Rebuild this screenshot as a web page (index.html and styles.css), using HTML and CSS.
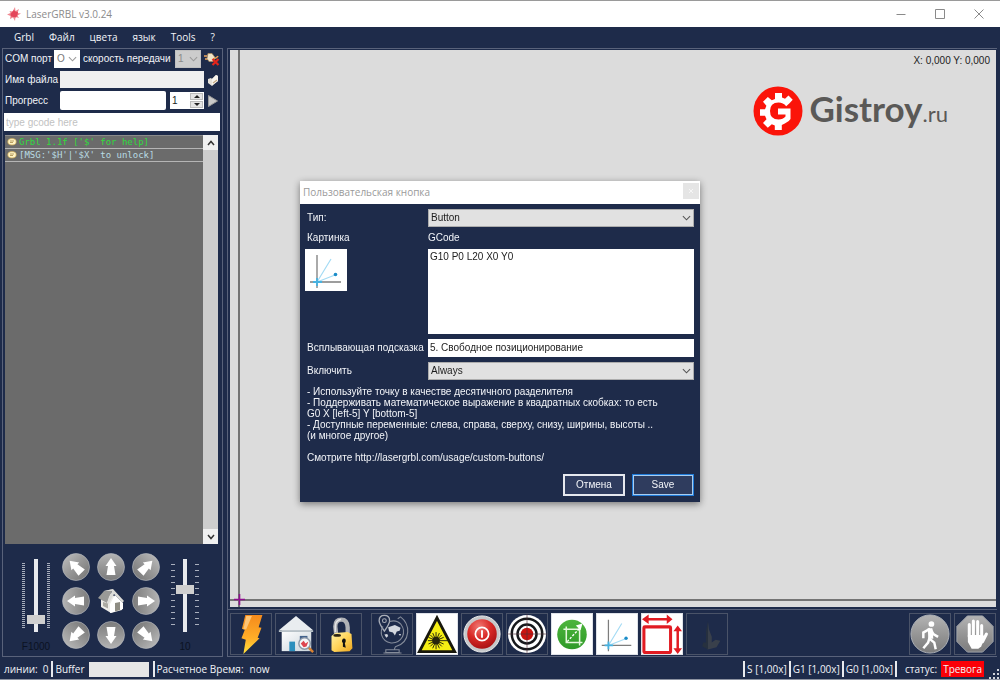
FILE: index.html
```html
<!DOCTYPE html>
<html lang="ru">
<head>
<meta charset="utf-8">
<title>LaserGRBL v3.0.24</title>
<link rel="stylesheet" href="styles.css">
</head>
<body>
<svg class="defs" aria-hidden="true">
  <defs>
    <linearGradient id="metal" x1="0" y1="0" x2="0" y2="1"><stop offset="0" stop-color="#b4b4b4"/><stop offset=".5" stop-color="#969696"/><stop offset="1" stop-color="#7c7c7c"/></linearGradient>
    <linearGradient id="bolt" x1="0" y1="0" x2="0" y2="1"><stop offset="0" stop-color="#f58a1c"/><stop offset=".6" stop-color="#ffae28"/><stop offset="1" stop-color="#ffe23c"/></linearGradient>
    <linearGradient id="gold" x1="0" y1="0" x2="1" y2="1"><stop offset="0" stop-color="#fff3a8"/><stop offset=".5" stop-color="#ffd45a"/><stop offset="1" stop-color="#eca41c"/></linearGradient>
    <linearGradient id="wall" x1="0" y1="0" x2="1" y2="1"><stop offset="0" stop-color="#ffffff"/><stop offset="1" stop-color="#c9d3da"/></linearGradient>
    <radialGradient id="redball" cx=".4" cy=".25" r=".8"><stop offset="0" stop-color="#f07872"/><stop offset=".5" stop-color="#d92a27"/><stop offset="1" stop-color="#a51012"/></radialGradient>
    <linearGradient id="green" x1="0" y1="0" x2="0" y2="1"><stop offset="0" stop-color="#4db53c"/><stop offset="1" stop-color="#2f9a28"/></linearGradient>
    <symbol id="chevron" viewBox="0 0 10 6"><path d="M1 1l4 4 4-4" fill="none" stroke="currentColor" stroke-width="1.2"/></symbol>
    <symbol id="jog" viewBox="0 0 28 28">
      <circle cx="14" cy="14" r="13.5" fill="url(#metal)" stroke="#b9bcc2" stroke-width=".6"/>
      <path d="M14 5l5.500 8h-2.500l1.500 9h-9l1.500-9h-2.500z" fill="#fff"/>
    </symbol>
    <symbol id="axes" viewBox="0 0 42 42">
      <path d="M12 6v33M5 33h31" stroke="#7d7d7d" stroke-width="1.300" fill="none"/>
      <path d="M12 33L26 10M12 33l18-7" stroke="#a4dbf4" stroke-width="1.200" fill="none"/>
      <path d="M12 29v8M8 33h9" stroke="#48b2e0" stroke-width="1.800"/>
      <circle cx="30.500" cy="25.500" r="1.800" fill="#1b8cc8"/>
    </symbol>
    <symbol id="bubble" viewBox="0 0 10 8"><ellipse cx="5" cy="3.800" rx="4.200" ry="3.200" fill="#fff3c4" stroke="#cfa952" stroke-width=".7"/><path d="M3 3h4M3 4.500h3" stroke="#9b7a38" stroke-width=".7"/></symbol>
  </defs>
</svg>

<header class="titlebar">
  <svg class="app-icon" viewBox="0 0 14 14"><path d="M8 0l.5 4L12 2l-1.500 4 3.500 .5-3.500 2L12 11l-3.500-1L8 14l-2-3.500L3 12l.5-3L0 7.500 3.500 6 2.500 4l3 .5z" fill="#f08a92"/><path d="M7 3l1.500 1.500L11 5l-.5 3L9 10.500 6.500 10 4 9.500 3.500 7 5 5z" fill="#e4455a"/></svg>
  <h1 class="app-title">LaserGRBL v3.0.24</h1>
  <div class="window-buttons">
    <button type="button" aria-label="Свернуть"><svg viewBox="0 0 10 10"><path d="M0.500 5.500h9"/></svg></button>
    <button type="button" aria-label="Развернуть"><svg viewBox="0 0 10 10"><path d="M.5 .5h9v9h-9z"/></svg></button>
    <button type="button" aria-label="Закрыть"><svg viewBox="0 0 10 10"><path d="M.5 .5l9 9M9.500 .5l-9 9"/></svg></button>
  </div>
</header>

<nav class="menu">
  <button type="button">Grbl</button><button type="button">Файл</button><button type="button">цвета</button><button type="button">язык</button><button type="button">Tools</button><button type="button">?</button>
</nav>

<main class="workspace">
  <section class="side">
    <div class="connect">
      <div class="row">
        <label for="port">COM порт</label>
        <span class="combo port"><select id="port"><option>O</option></select><svg><use href="#chevron"/></svg></span>
        <label for="baud">скорость передачи</label>
        <span class="combo baud"><select id="baud" disabled><option>1</option></select><svg><use href="#chevron"/></svg></span>
        <button type="button" class="mini" aria-label="Подключить"><svg viewBox="0 0 16 14"><path d="M0 4h3M1 7h3" stroke="#f0a860" stroke-width="1.500"/><path d="M4 1.500l4 0 3 4-2 4-4 0-2-3z" fill="#efe3c8" stroke="#a98a60" stroke-width=".8"/><path d="M9 7q4-1 5-3" stroke="#e8a052" stroke-width="1.500" fill="none"/><path d="M8.500 7l6 6M14.500 7l-6 6" stroke="#e2251b" stroke-width="2.200"/></svg></button>
      </div>
      <div class="row">
        <label for="file" class="lead">Имя файла</label>
        <input id="file" class="file" type="text" readonly>
        <button type="button" class="mini" aria-label="Открыть файл"><svg viewBox="0 0 16 14"><path d="M4 6l3-1 1 1 4-4 2 1v5l-6 5-4-3z" fill="#e6e1d8"/><path d="M8 6l4-4 2 1v5l-6 4z" fill="#f8f5ee"/><path d="M9 10l4-3" stroke="#c4a880" stroke-width="1.200"/></svg></button>
      </div>
      <div class="row">
        <label for="progress" class="lead">Прогресс</label>
        <progress id="progress" class="bar" value="0" max="100"></progress>
        <span class="spin"><input type="text" inputmode="numeric" value="1" aria-label="Повторы"><span class="spin-buttons"><button type="button" aria-label="Больше"><svg viewBox="0 0 6 3"><path d="M3 0l3 3H0z"/></svg></button><button type="button" aria-label="Меньше"><svg viewBox="0 0 6 3"><path d="M0 0h6L3 3z"/></svg></button></span></span>
        <button type="button" class="mini" aria-label="Пуск"><svg viewBox="0 0 16 14"><path d="M4.500 1.500l9 5.500-9 5.500z" fill="#c9c9c9" stroke="#999"/></svg></button>
      </div>
      <input class="gcode-line" type="text" placeholder="type gcode here" aria-label="GCode">
    </div>
    <div class="log">
      <ul class="log-lines">
        <li class="ok"><svg><use href="#bubble"/></svg>Grbl 1.1f ['$' for help]</li>
        <li><svg><use href="#bubble"/></svg>[MSG:'$H'|'$X' to unlock]</li>
      </ul>
      <div class="scrollbar">
        <button type="button" aria-label="Вверх"><svg viewBox="0 0 8 6"><path d="M1 5l3-3.500L7 5"/></svg></button>
        <button type="button" aria-label="Вниз"><svg viewBox="0 0 8 6"><path d="M1 1l3 3.500L7 1"/></svg></button>
      </div>
    </div>
    <div class="jog">
      <div class="slider fine">
        <div class="rail"><input id="speed" type="range" min="0" max="100" value="13"></div>
        <label for="speed">F1000</label>
      </div>
      <div class="pad">
        <button type="button" aria-label="Влево вверх"><svg><use href="#jog" transform="rotate(-45 14 14)"/></svg></button>
        <button type="button" aria-label="Вверх"><svg><use href="#jog"/></svg></button>
        <button type="button" aria-label="Вправо вверх"><svg><use href="#jog" transform="rotate(45 14 14)"/></svg></button>
        <button type="button" aria-label="Влево"><svg><use href="#jog" transform="rotate(-90 14 14)"/></svg></button>
        <button type="button" aria-label="Домой"><svg viewBox="0 0 28 28"><path d="M4 11l9-5 12 9v8L14 26 4 20z" fill="#ecebe7"/><path d="M13 17l5-9 8 8v6l-13 4z" fill="#fff"/><path d="M1 11L7 4l9-2-4 8-2 6z" fill="#9a9a97"/><path d="M7 4l9-2 11 12-1.500 1.500L17 7l-5.500 10L10 16l5-12z" fill="#dcdcd8"/><path d="M18 16l5-1v8l-5 1.500z" fill="#8e8c83"/><path d="M6 15l5 1.500v5L6 19z" fill="#aaa9a2"/></svg></button>
        <button type="button" aria-label="Вправо"><svg><use href="#jog" transform="rotate(90 14 14)"/></svg></button>
        <button type="button" aria-label="Влево вниз"><svg><use href="#jog" transform="rotate(-135 14 14)"/></svg></button>
        <button type="button" aria-label="Вниз"><svg><use href="#jog" transform="rotate(180 14 14)"/></svg></button>
        <button type="button" aria-label="Вправо вниз"><svg><use href="#jog" transform="rotate(135 14 14)"/></svg></button>
      </div>
      <div class="slider coarse">
        <div class="rail"><input id="step" type="range" min="0" max="100" value="60"></div>
        <label for="step">10</label>
      </div>
    </div>
  </section>

  <section class="stage">
    <div class="preview">
      <output class="coords">X: 0,000 Y: 0,000</output>
      <div class="brand">
        <svg class="brand-mark" viewBox="0 0 50 50">
          <circle cx="25" cy="25" r="24.500" fill="#fb1409"/>
          <path d="M22 7h7v4.500l3 1.300 3.500-3.300 4.200 4.300-3.200 3.400-3.300 3q-3-3.700-7.700-3.700-8.500 0-8.500 8.500t8.500 8.500q4.500 0 7-3v-2H25v-6h12.500v10.500l-1.700 2-4 2.500-3 1.500V44h-7v-4.500l-3-1.300-4 3.600-4.800-4.800 3.500-3.700-1.500-3.600H7v-6.500h5l1.400-3.500-3.400-4 4.800-4.700 4 3.300 3.200-1.300z" fill="#fff"/>
        </svg>
        <span class="brand-name">Gistroy<small>.ru</small></span>
      </div>
      <svg class="origin" viewBox="0 0 11 11"><path d="M5.500 0v11M0 5.500h11" stroke="#8d0f8d" stroke-width="1.600"/></svg>
    </div>
    <div class="toolbar">
      <button type="button" aria-label="Подключение"><svg viewBox="0 0 42 42"><path d="M15 1h18l-4 13 3 .5-4 10.500 2 .5L13 42l2.500-15-4.500-1.500 3.500-9-3-1z" fill="url(#bolt)"/><path d="M16 2h6L16 16h-3z" fill="#ffc574"/></svg></button>
      <button type="button" aria-label="Поиск дома"><svg viewBox="0 0 42 42"><path d="M6 17h31v22H6z" fill="url(#wall)"/><path d="M21 2L3 17h36z" fill="#e9edf0"/><path d="M3 17h36v2H3z" fill="#b8c2c8"/><path d="M14 29h6v10h-6z" fill="#2c8fbd"/><path d="M25 23h8v4h-8z" fill="#42628c"/><path d="M34 35l5 5" stroke="#d98232" stroke-width="2.500"/><circle cx="30" cy="31" r="6" fill="#f4f6f8" stroke="#8b98a8" stroke-width="1.500"/><path d="M26 31l3-3 2 3 3-2-2 5-3 1z" fill="#de4550"/></svg></button>
      <button type="button" aria-label="Разблокировать"><svg viewBox="0 0 42 42"><path d="M16 22l-1-9q0-7 6.500-7 6 0 6.500 8v6" fill="none" stroke="#b0b2b6" stroke-width="4.500"/><path d="M15 19v-6q0-6 6-7.500" fill="none" stroke="#e4e5e7" stroke-width="1.500"/><path d="M11 23l4-3 13-1 4 2 1 15-3 3-16 1-3-2z" fill="url(#gold)"/><ellipse cx="17" cy="22.500" rx="4" ry="1.500" fill="#2c2414"/><path d="M23 26q3-1 3 2 0 2-1 2.500l1 5-3-1 0-4q-2-2 0-4.500z" fill="#111"/></svg></button>
      <span class="gap"></span>
      <button type="button" aria-label="Глобус"><svg viewBox="0 0 42 42" fill="none" stroke="#858c9a" stroke-width="1.100"><path d="M13 1.500q5.500 0 5.500 5.500 0 3-5.500 11Q7.500 10 7.500 7q0-5.500 5.500-5.500z" stroke="#a9aeb8" stroke-width="1.400"/><circle cx="13" cy="7" r="2" stroke="#a9aeb8"/><path d="M18.500 8q7-2.500 12 3 4.500 6 1.500 13-4 7-12 6.500-8-1.500-10-8.500-1-5 1.500-9"/><path d="M27 5l3-2q8 6 7.500 16-1 12-13 15.500l-1 2.500M14.500 37.500h14v3h-14zM12 41h19"/><path d="M17 14l7-2.500 6 3-1 3-3 1-2 4-2-3-4-1zM13 21.500l3-.5 1 2-2 2zM28 21l2.500 0-1 2z" fill="#d3d7de" stroke="none"/></svg></button>
      <button type="button" class="lit" aria-label="Лазер"><svg viewBox="0 0 42 42"><path d="M21 4L39.500 39.500h-37z" fill="#f6ee14" stroke="#18170c" stroke-width="3"/><path d="M20 19v18M11.500 28h22M14 22l12 12M26 22L14 34M16.500 20l7 16M23.500 20l-7 16M12 24.500l16 7M12 31.500l16-7" stroke="#26240c" stroke-width="1"/><circle cx="20" cy="28" r="4" fill="#26240c"/></svg></button>
      <button type="button" aria-label="Сброс"><svg viewBox="0 0 42 42"><circle cx="21" cy="21" r="19" fill="#c6c8ca" stroke="#eceded"/><circle cx="21" cy="21" r="15.500" fill="url(#redball)"/><circle cx="21" cy="21" r="7" fill="none" stroke="#fff" stroke-width="1.800"/><path d="M21 17v8" stroke="#fff" stroke-width="2"/></svg></button>
      <button type="button" aria-label="Центр"><svg viewBox="0 0 42 42"><circle cx="21" cy="21" r="20" fill="#fff"/><g fill="none" stroke="#17191c" stroke-width="2.600"><circle cx="21" cy="21" r="16"/><circle cx="21" cy="21" r="10"/></g><circle cx="21" cy="21" r="6.500" fill="#cb1410"/><path d="M21 0v42M0 21h42" stroke="#50303a" stroke-width=".7"/></svg></button>
      <button type="button" class="lit" aria-label="Рамка"><svg viewBox="0 0 42 42"><circle cx="21" cy="21.500" r="15.500" fill="url(#green)"/><path d="M15 13v17h17M12 16h17v17" fill="none" stroke="#e5f8dc" stroke-width="1.600"/><path d="M16 29L29 15" stroke="#fff" stroke-width="1.400" stroke-dasharray="2.500 1.500"/><path d="M32 10l-2 7-5-5z" fill="#fff"/></svg></button>
      <button type="button" class="lit" aria-label="Свободное позиционирование"><svg><use href="#axes"/></svg></button>
      <button type="button" class="lit" aria-label="Размер"><svg viewBox="0 0 42 42"><rect x="2" y="13.500" width="28" height="27" rx="1" fill="none" stroke="#e11b22" stroke-width="3.200"/><path d="M5 5.500h23M37.500 17v20" stroke="#e11b22" stroke-width="2.600"/><path d="M0 5.500l7-5v10zM32 5.500l-6-5v10zM37.500 12l-4.500 6h9zM37.500 42l-4.500-6h9z" fill="#e11b22"/></svg></button>
      <button type="button" aria-label="Фокус"><svg viewBox="0 0 42 42"><path d="M22 8l1 8 3 8 0 6 4-3 5 1-4 7-8 2h-2z" fill="#39404b"/><path d="M22 8v29l-6-3 1-4 3 0 0-12z" fill="#27313f"/></svg></button>
      <span class="push"></span>
      <button type="button" aria-label="Продолжить"><svg viewBox="0 0 42 42"><circle cx="21" cy="21" r="20" fill="url(#metal)" stroke="#b0b4ba"/><circle cx="22.500" cy="10.500" r="3" fill="#fff"/><path d="M21 15.500l-7 4v6M21.500 16l3 5 5 3M21 17l-.5 9 5 4 1.500 7M20.500 25l-1.500 5-5 6" fill="none" stroke="#fff" stroke-width="2.600"/><path d="M18.500 15l5 0 1 11h-5z" fill="#fff"/></svg></button>
      <button type="button" aria-label="Пауза"><svg viewBox="0 0 42 42"><path d="M13 2h16l11 11v16L29 40H13L2 29V13z" fill="url(#metal)" stroke="#a2a6ad"/><g stroke="#fff" stroke-width="3.200" stroke-linecap="round" fill="none"><path d="M15 24V11M19.300 22V7.500M23.800 22V8M28 24V12M29 29l4-8"/></g><path d="M13.500 22h16l2 3-4 9-3 2.500h-7l-4-7z" fill="#fff"/></svg></button>
    </div>
  </section>
</main>

<footer class="status">
  <span class="lines">линии:</span><span class="count">0</span>
  <span class="cell"><label for="buffer">Buffer</label><progress id="buffer" value="0" max="100"></progress></span>
  <span class="cell">Расчетное Время:<span class="time">now</span></span>
  <span class="push"></span>
  <span class="cell rate">S [1,00x]</span><span class="cell rate">G1 [1,00x]</span><span class="cell rate">G0 [1,00x]</span>
  <span class="cell state">статус:<strong class="alarm">Тревога</strong></span>
  <svg class="grip" viewBox="0 0 10 10"><path d="M8 0h2v2H8zM8 4h2v2H8zM4 4h2v2H4zM8 8h2v2H8zM4 8h2v2H4zM0 8h2v2H0z" fill="#d0d3da"/></svg>
</footer>

<div class="overlay">
  <form class="dialog" role="dialog" aria-labelledby="dlg-title">
    <div class="dialog-title"><h2 id="dlg-title">Пользовательская кнопка</h2><button type="button" aria-label="Закрыть окно"><svg viewBox="0 0 10 10"><path d="M3 3l4 4M7 3L3 7"/></svg></button></div>
    <div class="dialog-body">
      <div class="fields">
        <label for="type">Тип:</label>
        <span class="combo"><select id="type"><option>Button</option></select><svg><use href="#chevron"/></svg></span>
        <span>Картинка</span>
        <label for="code">GCode</label>
        <button type="button" class="picture" aria-label="Выбрать картинку"><svg><use href="#axes"/></svg></button>
        <textarea id="code" spellcheck="false">G10 P0 L20 X0 Y0</textarea>
        <label for="tip">Всплывающая подсказка</label>
        <input id="tip" type="text" value="5. Свободное позиционирование">
        <label for="enable">Включить</label>
        <span class="combo"><select id="enable"><option>Always</option></select><svg><use href="#chevron"/></svg></span>
      </div>
      <div class="hints">
        <p>- Используйте точку в качестве десятичного разделителя<br>- Поддерживать математическое выражение в квадратных скобках: то есть<br>G0 X [left-5] Y [bottom-5]<br>- Доступные переменные: слева, справа, сверху, снизу, ширины, высоты ..<br>(и многое другое)</p>
        <p>Смотрите <a href="http://lasergrbl.com/usage/custom-buttons/">http://lasergrbl.com/usage/custom-buttons/</a></p>
      </div>
      <div class="actions"><button type="button">Отмена</button><button type="submit" class="primary">Save</button></div>
    </div>
  </form>
</div>
</body>
</html>
```
FILE: styles.css
```css
:root {
  --navy: #1e2b4a;
  --line: #59627a;
  --ui: "Liberation Sans", Arial, sans-serif;
  --menu: "Open Sans", "Noto Sans", sans-serif;
}
* { box-sizing: border-box; }
body {
  margin: 0;
  min-height: 100vh;
  display: flex;
  flex-direction: column;
  background: var(--navy);
  color: #f2f4f8;
  font: 10px/12px var(--ui);
}
button, input, select, textarea { font: inherit; color: inherit; margin: 0; padding: 0; border: 0; border-radius: 0; }
button { background: none; }
svg { display: block; }
h1, h2, p, ul { margin: 0; padding: 0; font-weight: 400; }
.defs { position: absolute; width: 0; height: 0; }
.push { flex: 1; }

.titlebar {
  display: flex;
  align-items: center;
  height: 27px;
  padding: 0 2px 0 7px;
  border-top: 1px solid #9a9a9a;
  background: #fff;
  color: #8b8b8b;
}
.app-icon { width: 14px; height: 14px; }
.app-title { margin-left: 5px; font: 10px/14px var(--menu); }
.window-buttons { display: flex; margin-left: auto; }
.window-buttons button { width: 39px; height: 26px; display: grid; place-items: center; }
.window-buttons svg { width: 10px; height: 10px; fill: none; stroke: #8a8a8a; }

.menu { display: flex; gap: 15px; height: 20px; padding: 0 14px; }
.menu button { font: 10px/20px var(--menu); }

.workspace { flex: 1; display: flex; gap: 4px; padding: 1px 3px 2px 2px; }
.side { width: 221px; display: flex; flex-direction: column; border: 1px solid var(--line); }
.connect { display: flex; flex-direction: column; gap: 2px; padding: 0 2px 0 1px; }
.row { display: flex; align-items: center; height: 19px; padding-left: 1px; white-space: nowrap; }
.row .lead { width: 55px; }
.combo { display: grid; align-items: center; color: #1c1c1c; }
.combo select { grid-area: 1 / 1; width: 100%; height: 18px; padding: 0 2px; appearance: none; background: #e1e1e1; color: #1c1c1c; border: 1px solid #adadad; opacity: 1; }
.combo svg { grid-area: 1 / 1; justify-self: end; width: 9px; height: 6px; margin-right: 3px; color: #555; pointer-events: none; }
.port { width: 26px; margin: 0 3px 0 2px; }
.port select { background: #fff; border-color: #fff; color: #777; }
.baud { width: 26px; margin: 0 3px 0 auto; }
.baud select { background: #ccc; border-color: #c0c0c0; color: #8a8a8a; }
.port svg, .baud svg { color: #9a9a9a; }
.mini { width: 16px; height: 16px; }
.mini svg { width: 16px; height: 14px; }
.file { flex: 1; min-width: 0; height: 17px; background: #f0f0f0; }
.bar, .status progress { appearance: none; border: 0; background: #e6e6e6; }
.bar::-webkit-progress-bar, .status progress::-webkit-progress-bar { background: transparent; }
.bar { flex: 1; min-width: 0; height: 19px; margin-right: 4px; border-radius: 2px; background: #fff; }
.spin { display: flex; width: 34px; height: 17px; padding: 1px; background: #fff; color: #222; }
.spin input { width: 19px; padding-left: 1px; background: none; }
.spin-buttons { flex: 1; display: grid; gap: 1px; }
.spin-buttons button { display: grid; place-items: center; height: 7px; background: #e4e4e4; border: 1px solid #bbb; }
.spin-buttons svg { width: 6px; height: 3px; fill: #222; }
.gcode-line { height: 18px; margin-top: 1px; padding: 0 2px; background: #fff; color: #222; }
.gcode-line::placeholder { color: #c2c2c2; opacity: 1; }

.log { flex: 1; display: flex; margin: 4px 4px 0 2px; background: #6b6b6b; }
.log-lines { flex: 1; list-style: none; }
.log-lines li { display: flex; align-items: center; gap: 2px; height: 13px; padding: 0 2px; border-bottom: 1px solid #b5b5b5; color: #b9dbe4; font: 9px/12px "DejaVu Sans Mono", "Liberation Mono", monospace; white-space: nowrap; }
.log-lines li:first-child { height: 14px; border-top: 1px solid #8b8b8b; }
.log-lines .ok { color: #2fdc3c; }
.log-lines svg { width: 10px; height: 8px; }
.scrollbar { width: 15px; display: flex; flex-direction: column; justify-content: space-between; background: #cdcdcd; }
.scrollbar button { height: 15px; display: grid; place-items: center; background: #f0f0f0; }
.scrollbar svg { width: 8px; height: 6px; fill: none; stroke: #333; stroke-width: 1.5; }

.jog { display: flex; justify-content: space-between; padding: 9px 21px 3px 17px; }
.pad { display: grid; grid-template-columns: repeat(3, 28px); grid-auto-rows: 28px; gap: 6px 7px; }
.pad svg { width: 28px; height: 28px; }
.slider { width: 32px; display: flex; flex-direction: column; align-items: center; gap: 9px; padding-top: 6px; color: #0b1222; }
.rail { width: 28px; height: 73px; display: grid; justify-items: center; }
.fine .rail { background: repeating-linear-gradient(#a9afbd 0 1px, transparent 1px 2px) 0 4px / 3px 65px no-repeat, repeating-linear-gradient(#a9afbd 0 1px, transparent 1px 2px) 100% 4px / 3px 65px no-repeat; }
.coarse .rail { background: repeating-linear-gradient(#a9afbd 0 1px, transparent 1px 6px) 0 5px / 4px 64px no-repeat, repeating-linear-gradient(#a9afbd 0 1px, transparent 1px 6px) 100% 5px / 4px 64px no-repeat; }
.rail input { appearance: none; writing-mode: vertical-lr; direction: rtl; width: 18px; height: 73px; background: linear-gradient(#e8eaee, #e8eaee) 50% 0 / 4px 100% no-repeat; }
.rail input::-webkit-slider-thumb { appearance: none; width: 18px; height: 9px; background: #cfcfcf; }

.stage { flex: 1; min-width: 0; display: flex; flex-direction: column; border: 1px solid var(--line); border-right: 0; }
.preview {
  position: relative;
  flex: 1;
  margin: 1px 1px 2px 2px;
  padding: 5px 6px;
  background:
    linear-gradient(#747474, #747474) 8px 0 / 2px 100% no-repeat,
    linear-gradient(#747474, #747474) 0 calc(100% - 6px) / 100% 2px no-repeat,
    #dcdcdc;
  color: #222;
}
.coords { display: block; text-align: right; }
.brand { display: flex; align-items: center; justify-content: flex-end; gap: 6px; margin: 16px 42px 0 0; }
.brand-mark { width: 50px; height: 50px; }
.brand-name { color: #5a5957; font: 700 35px/50px Lato, sans-serif; }
.brand-name small { font-size: 22px; font-weight: 400; }
.origin { position: absolute; left: 4px; bottom: 2px; width: 11px; height: 11px; }

.toolbar { display: flex; gap: 3px; padding: 3px 1px 1px 2px; border-top: 1px solid var(--line); }
.toolbar button { width: 42px; height: 42px; border: 1px solid #4a5368; }
.toolbar button svg { width: 40px; height: 40px; }
.toolbar .lit { background: #fff; border-color: #dfe2e8; }
.toolbar .gap { width: 3px; }

.status { display: flex; align-items: center; height: 21px; padding: 0 1px 0 4px; border-bottom: 1px solid #8d93a1; font: 10px/16px var(--menu); }
.count { margin: 0 3px 0 5px; }
.cell { display: flex; align-items: center; height: 16px; padding: 0 4px 0 2px; border-left: 2px solid #e8eaee; }
.rate { padding-right: 2px; }
.status progress { width: 60px; height: 15px; margin-left: 4px; }
.time { margin-left: 6px; }
.state { padding: 0 3px 0 8px; }
.alarm { margin-left: 4px; padding: 0 2px; background: #fb0007; font-weight: 400; }
.grip { width: 10px; height: 10px; align-self: flex-end; margin-left: 2px; }

.overlay { position: fixed; inset: 0; display: grid; place-items: center; padding-top: 2px; pointer-events: none; }
.dialog { width: 400px; background: var(--navy); box-shadow: 0 2px 7px #0007; pointer-events: auto; }
.dialog-title { display: flex; justify-content: space-between; height: 23px; padding: 2px 1px 0 3px; background: #fff; color: #9a9a9a; }
.dialog-title h2 { font: 10px/19px var(--menu); }
.dialog-title button { width: 16px; height: 16px; background: #e5e5e5; display: grid; place-items: center; }
.dialog-title svg { width: 10px; height: 10px; stroke: #f6f6f6; }
.dialog-body { padding: 5px 6px 6px 7px; }
.fields { display: grid; grid-template-columns: 121px 1fr; row-gap: 5px; align-items: center; }
.fields textarea { display: block; width: 100%; height: 85px; padding: 2px; resize: none; background: #fff; color: #222; }
.fields input { width: 100%; height: 18px; padding: 0 2px; background: #fff; color: #222; }
.picture { width: 42px; height: 42px; margin-left: -2px; align-self: start; background: #fff; }
.picture svg { width: 42px; height: 42px; }
.hints { margin-top: 6px; line-height: 11px; }
.hints p + p { margin-top: 11px; }
.hints a { color: inherit; text-decoration: none; }
.actions { display: flex; justify-content: flex-end; gap: 7px; margin-top: 11px; }
.actions button { width: 62px; height: 22px; background: #2f3c5e; border: 2px solid #e6e8ee; }
.actions .primary { border: 1px solid #1f7ad8; box-shadow: inset 0 0 0 1px #a8cdf0; }
```
